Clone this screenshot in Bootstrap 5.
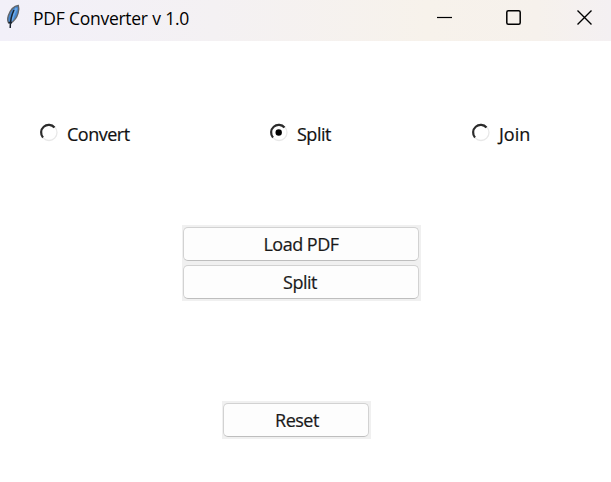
<!DOCTYPE html>
<html lang="en">
<head>
<meta charset="utf-8">
<meta name="viewport" content="width=device-width, initial-scale=1">
<title>PDF Converter v 1.0</title>
<link href="https://cdn.jsdelivr.net/npm/bootstrap@5.3.0/dist/css/bootstrap.min.css" rel="stylesheet">
<style>
body{width:611px;height:482px;overflow:hidden;background:#fff;color:#111;font-family:"Open Sans","Noto Sans",sans-serif}
.titlebar{height:41px;background:linear-gradient(90deg,#f2f0f9 0,#f4f1f3 35%,#f7f2eb 70%,#f6f1ec 88%,#f4f0f2 100%)}
.feather{margin:4px 0 0 5px;width:17px;height:26px}
.caption-text{margin:5px 0 0 11px;font-size:17.500px;line-height:26px;letter-spacing:-.28px;word-spacing:.3px;color:#000;white-space:nowrap}
.win-controls{margin:9px 18px 0 0;gap:53px}
.win-controls .maximize{margin:0 1px 0 -1px}
.modes{padding:80px 0 0 39px;height:184px;font-size:18px;line-height:26px;letter-spacing:-.5px}
.mode{height:26px;cursor:pointer}
.mode svg{margin:1px 9px 0 0}
.mode-convert{width:230px}
.mode-split{width:202px}
.mode-join{letter-spacing:0}
.mode span,.push{-webkit-text-stroke:.2px currentColor}
.frame{background:#f0f0f0;padding:2px 2px 2px 1px}
.actions{width:239px;margin-left:182px;gap:4px}
.reset{width:149px;margin:100px 0 0 222px}
.push{height:34px;padding:0;background:#fdfdfd;border:1px solid #d2d2d2;border-bottom-color:#bebebe;border-radius:5px;color:#1a1a1a;font-size:18px;line-height:33px;letter-spacing:-.5px}
.push-split{padding-right:2px}
.push-reset{padding-left:2px}
</style>
<script src="https://cdn.jsdelivr.net/npm/bootstrap@5.3.0/dist/js/bootstrap.bundle.min.js" defer></script>
</head>
<body>
<header class="titlebar d-flex align-items-start">
  <svg class="feather" viewBox="0 0 17 26"><path d="M13.300 1.500C9 2 5.200 6.500 3.400 11.500c-1 3.200-.9 5.500.2 7.300l2 .3c3.500-2 6.300-5.800 7.500-10 .8-3 .9-5.600.2-7.600z" fill="#4486cf" stroke="#62666b" stroke-width="1.400"/><path d="M11.500 4C9.500 8 8 12 6.800 16.500" fill="none" stroke="#6ea9e6" stroke-width="2"/><path d="M9 6C6.500 11 5.200 17 5.200 24M3.500 18.500l3.500.3" fill="none" stroke="#17212d" stroke-width="1.500"/></svg>
  <span class="caption-text">PDF Converter v 1.0</span>
  <div class="win-controls d-flex ms-auto">
    <svg width="17" height="17"><path d="M1 8.500h15" stroke="#000" stroke-width="1.200"/></svg>
    <svg class="maximize" width="17" height="17"><rect x="1.800" y="1.800" width="13.400" height="13.400" rx="1.500" fill="none" stroke="#000" stroke-width="1.500"/></svg>
    <svg width="17" height="17"><path d="M1.500 1.500l14 14M15.500 1.500l-14 14" stroke="#000" stroke-width="1.400"/></svg>
  </div>
</header>
<main>
  <div class="modes d-flex" role="radiogroup">
    <div class="mode mode-convert d-flex align-items-start" role="radio" aria-checked="false"><svg width="19" height="20" viewBox="0 0 19 20"><circle cx="10" cy="10.500" r="8" fill="#fff" stroke="#e8e8e8" stroke-width="1.300"/><path d="M4 15.500A7.500 7.500 0 0 1 15.500 5.500" fill="none" stroke="#2b2b2b" stroke-width="2.200"/></svg><span>Convert</span></div>
    <div class="mode mode-split d-flex align-items-start" role="radio" aria-checked="true"><svg width="19" height="20" viewBox="0 0 19 20"><circle cx="10" cy="10.500" r="8" fill="#fff" stroke="#e8e8e8" stroke-width="1.300"/><path d="M4 15.500A7.500 7.500 0 0 1 15.500 5.500" fill="none" stroke="#2b2b2b" stroke-width="2.200"/><circle cx="9.700" cy="10.500" r="3.200" fill="#000"/></svg><span>Split</span></div>
    <div class="mode mode-join d-flex align-items-start" role="radio" aria-checked="false"><svg width="19" height="20" viewBox="0 0 19 20"><circle cx="10" cy="10.500" r="8" fill="#fff" stroke="#e8e8e8" stroke-width="1.300"/><path d="M4 15.500A7.500 7.500 0 0 1 15.500 5.500" fill="none" stroke="#2b2b2b" stroke-width="2.200"/></svg><span>Join</span></div>
  </div>
  <div class="frame actions d-flex flex-column">
    <button type="button" class="btn push w-100">Load PDF</button>
    <button type="button" class="btn push push-split w-100">Split</button>
  </div>
  <div class="frame reset d-flex">
    <button type="button" class="btn push push-reset w-100">Reset</button>
  </div>
</main>
</body>
</html>
